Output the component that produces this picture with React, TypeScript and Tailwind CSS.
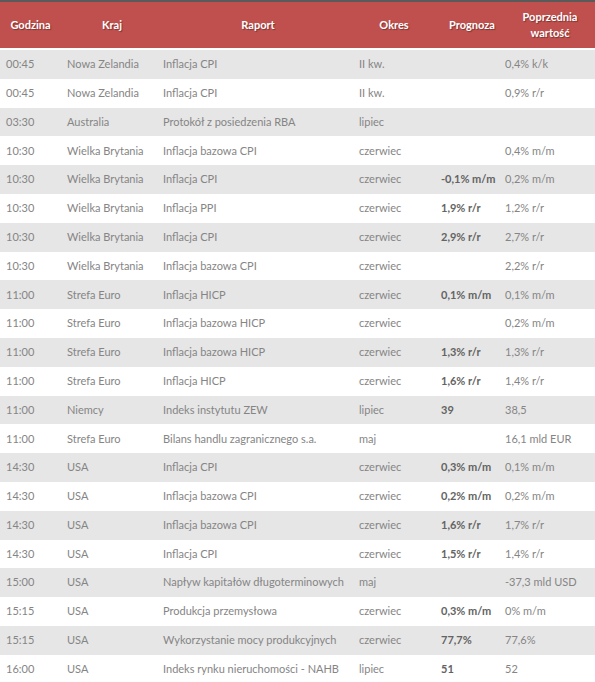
import React from "react";

type Row = [string, string, string, string, string, string];

const rows: Row[] = [
  ["00:45", "Nowa Zelandia", "Inflacja CPI", "II kw.", "", "0,4% k/k"],
  ["00:45", "Nowa Zelandia", "Inflacja CPI", "II kw.", "", "0,9% r/r"],
  ["03:30", "Australia", "Protokół z posiedzenia RBA", "lipiec", "", ""],
  ["10:30", "Wielka Brytania", "Inflacja bazowa CPI", "czerwiec", "", "0,4% m/m"],
  ["10:30", "Wielka Brytania", "Inflacja CPI", "czerwiec", "-0,1% m/m", "0,2% m/m"],
  ["10:30", "Wielka Brytania", "Inflacja PPI", "czerwiec", "1,9% r/r", "1,2% r/r"],
  ["10:30", "Wielka Brytania", "Inflacja CPI", "czerwiec", "2,9% r/r", "2,7% r/r"],
  ["10:30", "Wielka Brytania", "Inflacja bazowa CPI", "czerwiec", "", "2,2% r/r"],
  ["11:00", "Strefa Euro", "Inflacja HICP", "czerwiec", "0,1% m/m", "0,1% m/m"],
  ["11:00", "Strefa Euro", "Inflacja bazowa HICP", "czerwiec", "", "0,2% m/m"],
  ["11:00", "Strefa Euro", "Inflacja bazowa HICP", "czerwiec", "1,3% r/r", "1,3% r/r"],
  ["11:00", "Strefa Euro", "Inflacja HICP", "czerwiec", "1,6% r/r", "1,4% r/r"],
  ["11:00", "Niemcy", "Indeks instytutu ZEW", "lipiec", "39", "38,5"],
  ["11:00", "Strefa Euro", "Bilans handlu zagranicznego s.a.", "maj", "", "16,1 mld EUR"],
  ["14:30", "USA", "Inflacja CPI", "czerwiec", "0,3% m/m", "0,1% m/m"],
  ["14:30", "USA", "Inflacja bazowa CPI", "czerwiec", "0,2% m/m", "0,2% m/m"],
  ["14:30", "USA", "Inflacja bazowa CPI", "czerwiec", "1,6% r/r", "1,7% r/r"],
  ["14:30", "USA", "Inflacja CPI", "czerwiec", "1,5% r/r", "1,4% r/r"],
  ["15:00", "USA", "Napływ kapitałów długoterminowych", "maj", "", "-37,3 mld USD"],
  ["15:15", "USA", "Produkcja przemysłowa", "czerwiec", "0,3% m/m", "0% m/m"],
  ["15:15", "USA", "Wykorzystanie mocy produkcyjnych", "czerwiec", "77,7%", "77,6%"],
  ["16:00", "USA", "Indeks rynku nieruchomości - NAHB", "lipiec", "51", "52"],
];

const cols = "grid grid-cols-[61px_96px_196px_82px_64px_96px]";

export default function App() {
  return (
    <div
      className="w-[595px] h-[682px] overflow-hidden bg-white text-[11px]"
      style={{ fontFamily: "Lato, 'Open Sans', sans-serif" }}
    >
      <div className="border-t-2 border-[#5a5a5a] pb-[2px] bg-white">
        <div
          className={`${cols} h-[46px] bg-[#c0504d] text-white font-bold items-center text-center leading-[16px] [text-shadow:1px_1px_1px_rgba(0,0,0,0.35)]`}
        >
          <div>Godzina</div>
          <div className="pl-[6px]">Kraj</div>
          <div className="pl-[6px]">Raport</div>
          <div>Okres</div>
          <div className="pl-[10px]">Prognoza</div>
          <div className="pl-[6px]">
            Poprzednia
            <br />
            wartość
          </div>
        </div>
      </div>
      {rows.map((r, i) => (
        <div
          key={i}
          className={`${cols} h-[28.8px] items-center text-[#858585] ${
            i % 2 === 0 ? "bg-[#e6e6e6]" : "bg-white"
          }`}
        >
          <div className="pl-[6px] whitespace-nowrap">{r[0]}</div>
          <div className="pl-[6px] whitespace-nowrap">{r[1]}</div>
          <div className="pl-[6px] whitespace-nowrap">{r[2]}</div>
          <div className="pl-[6px] whitespace-nowrap">{r[3]}</div>
          <div className="pl-[6px] whitespace-nowrap font-bold text-[#636363]">{r[4]}</div>
          <div className="pl-[6px] whitespace-nowrap">{r[5]}</div>
        </div>
      ))}
    </div>
  );
}
